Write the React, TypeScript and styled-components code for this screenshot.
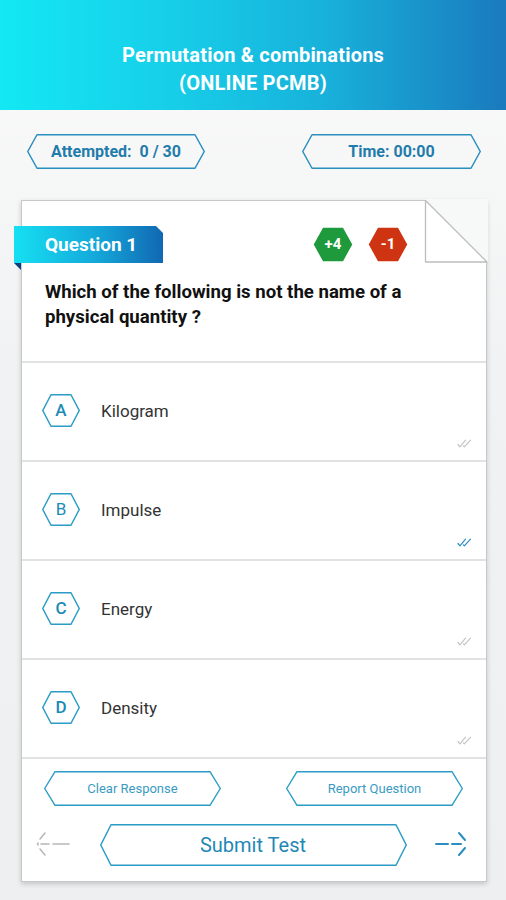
import React from 'react';
import styled, { createGlobalStyle } from 'styled-components';

const GlobalStyle = createGlobalStyle`
  html, body { margin: 0; padding: 0; }
  body {
    background: #f3f4f5;
    font-family: Roboto, "Liberation Sans", sans-serif;
  }
`;

const Page = styled.div`
  width: 506px;
  min-height: 900px;
  background: linear-gradient(180deg, #fbfbfb 0%, #f1f2f3 40%, #eeeff0 100%);
  overflow: hidden;
`;

const Header = styled.header`
  height: 110px;
  box-sizing: border-box;
  padding-top: 41px;
  background: linear-gradient(90deg, #13e8f4 0%, #17cde8 35%, #18b0da 65%, #1a7abd 100%);
  color: #fff;
  text-align: center;
  font-weight: 700;
  font-size: 20px;
  letter-spacing: 0.2px;
  line-height: 28px;
`;

const StatRow = styled.div`
  display: flex;
  justify-content: space-between;
  padding: 24px 25px 0 27px;
`;

const HexBox = styled.div<{ $w: number; $h: number }>`
  position: relative;
  width: ${p => p.$w}px;
  height: ${p => p.$h}px;
  flex-shrink: 0;
  display: flex;
  align-items: center;
  justify-content: center;
`;

const HexSvg = styled.svg`
  position: absolute;
  left: 0;
  top: 0;
  overflow: visible;
`;

const HexLabel = styled.span<{ $size: number; $color: string; $weight: number }>`
  position: relative;
  font-size: ${p => p.$size}px;
  color: ${p => p.$color};
  font-weight: ${p => p.$weight};
  white-space: pre;
  line-height: 1;
`;

type HexProps = {
  w: number;
  h: number;
  d: number;
  stroke?: string;
  fill?: string;
  sw?: number;
  children?: React.ReactNode;
};

function Hex({ w, h, d, stroke = 'none', fill = 'none', sw = 1.5, children }: HexProps) {
  const o = sw / 2;
  const pts = `${d},${o} ${w - d},${o} ${w - o},${h / 2} ${w - d},${h - o} ${d},${h - o} ${o},${h / 2}`;
  return (
    <HexBox $w={w} $h={h}>
      <HexSvg width={w} height={h} viewBox={`0 0 ${w} ${h}`}>
        <polygon points={pts} fill={fill} stroke={stroke} strokeWidth={sw} strokeLinejoin="round" />
      </HexSvg>
      {children}
    </HexBox>
  );
}

const Card = styled.section`
  position: relative;
  margin: 31px 0 0 21px;
  width: 466px;
  box-sizing: border-box;
  background: #fff;
  border: 1px solid #c8c8c8;
  box-shadow: 0 2px 5px rgba(0, 0, 0, 0.18);
`;

const Fold = styled.svg`
  position: absolute;
  top: -2px;
  right: -2px;
  overflow: visible;
`;

const HeadRow = styled.div`
  display: flex;
  align-items: center;
  padding-top: 25px;
`;

const Ribbon = styled.div`
  position: relative;
  margin-left: -8px;
  width: 149px;
  height: 37px;
  box-sizing: border-box;
  padding-left: 31px;
  display: flex;
  align-items: center;
  color: #fff;
  font-weight: 700;
  font-size: 19px;
  background: linear-gradient(90deg, #16e0f2 0%, #14a8da 55%, #1168b2 100%);
  clip-path: polygon(0 0, 142px 0, 149px 7px, 149px 100%, 0 100%);
`;

const RibbonTail = styled.div`
  position: absolute;
  left: -8px;
  top: 62px;
  width: 0;
  height: 0;
  border-top: 7px solid #0b3f80;
  border-left: 7px solid transparent;
`;

const Badges = styled.div`
  display: flex;
  gap: 15px;
  margin-left: auto;
  margin-right: 78px;
`;

const QuestionText = styled.p`
  margin: 0;
  padding: 17px 30px 31px 23px;
  font-size: 18.6px;
  font-weight: 700;
  line-height: 25px;
  color: #111;
`;

const OptionRow = styled.div`
  position: relative;
  height: 99px;
  box-sizing: border-box;
  border-top: 2px solid #e2e2e2;
  display: flex;
  align-items: center;
  padding: 0 0 2px 20px;
  gap: 21px;
`;

const OptionText = styled.span`
  font-size: 17px;
  color: #333;
`;

const Tick = styled.svg`
  position: absolute;
  right: 13px;
  bottom: 12px;
`;

const Footer = styled.div`
  border-top: 2px solid #e2e2e2;
  padding: 12px 23px 15px 22px;
  display: flex;
  flex-direction: column;
  gap: 18px;
`;

const ButtonRow = styled.div`
  display: flex;
  justify-content: space-between;
`;

const SubmitRow = styled.div`
  display: flex;
  align-items: center;
  justify-content: space-between;
  margin: 0 -7px 0 -8px;
`;

const options = [
  { letter: 'A', text: 'Kilogram', selected: false },
  { letter: 'B', text: 'Impulse', selected: true },
  { letter: 'C', text: 'Energy', selected: false },
  { letter: 'D', text: 'Density', selected: false },
];

const BLUE = '#2a9cc6';

function DoubleTick({ color }: { color: string }) {
  return (
    <Tick width="16" height="9" viewBox="0 0 16 9">
      <path d="M1 5.5 L3 7.8 L8.5 1.2 M6.5 7 L7.3 7.8 L13.5 1.2" fill="none" stroke={color} strokeWidth="1.2" strokeLinecap="round" strokeLinejoin="round" />
    </Tick>
  );
}

export default function App() {
  return (
    <Page>
      <GlobalStyle />
      <Header>
        Permutation &amp; combinations
        <br />
        (ONLINE PCMB)
      </Header>
      <StatRow>
        <Hex w={178} h={35} d={10} stroke="#2a8fbf" sw={1.5}>
          <HexLabel $size={16} $color="#1f7cab" $weight={700}>{'Attempted:  0 / 30'}</HexLabel>
        </Hex>
        <Hex w={179} h={35} d={10} stroke="#2a8fbf" sw={1.5}>
          <HexLabel $size={16} $color="#1f7cab" $weight={700}>Time: 00:00</HexLabel>
        </Hex>
      </StatRow>
      <Card>
        <Fold width="64" height="64" viewBox="0 0 64 64">
          <polygon points="0,0 64,0 64,64" fill="#f7f8f8" />
          <polygon points="1.5,1.5 63,63 1.5,63" fill="#fff" stroke="#bdbdbd" strokeWidth="1.3" strokeLinejoin="round" />
        </Fold>
        <HeadRow>
          <Ribbon>Question 1</Ribbon>
          <RibbonTail />
          <Badges>
            <Hex w={40} h={35} d={10} fill="#1e9a3c">
              <HexLabel $size={15} $color="#fff" $weight={700}>+4</HexLabel>
            </Hex>
            <Hex w={40} h={35} d={10} fill="#cf3412">
              <HexLabel $size={15} $color="#fff" $weight={700}>-1</HexLabel>
            </Hex>
          </Badges>
        </HeadRow>
        <QuestionText>
          Which of the following is not the name of a
          <br />
          physical quantity ?
        </QuestionText>
        {options.map(o => (
          <OptionRow key={o.letter}>
            <Hex w={38} h={33} d={9} stroke={BLUE} sw={1.5}>
              <HexLabel $size={17} $color="#1a8ab6" $weight={o.selected ? 400 : 500}>{o.letter}</HexLabel>
            </Hex>
            <OptionText>{o.text}</OptionText>
            <DoubleTick color={o.selected ? '#2a8fc0' : '#c4c4c4'} />
          </OptionRow>
        ))}
        <Footer>
          <ButtonRow>
            <Hex w={177} h={35} d={11} stroke={BLUE} sw={1.4}>
              <HexLabel $size={13} $color="#3a9bc2" $weight={400}>Clear Response</HexLabel>
            </Hex>
            <Hex w={177} h={35} d={11} stroke={BLUE} sw={1.4}>
              <HexLabel $size={13} $color="#3a9bc2" $weight={400}>Report Question</HexLabel>
            </Hex>
          </ButtonRow>
          <SubmitRow>
            <svg width="36" height="28" viewBox="0 0 36 28">
              <g fill="none" stroke="#b8b8b8" strokeWidth="1.6" strokeLinecap="round">
                <path d="M9 2 L4 8" />
                <path d="M2 12 L1.5 13 L2 14" />
                <path d="M4 18 L9 24" />
                <path d="M5 13 L13 13" />
                <path d="M17 13 L33 13" />
              </g>
            </svg>
            <Hex w={307} h={42} d={11} stroke={BLUE} sw={1.5}>
              <HexLabel $size={20} $color="#1f88b6" $weight={400}>Submit Test</HexLabel>
            </Hex>
            <svg width="36" height="28" viewBox="0 0 36 28">
              <g fill="none" stroke="#2a8fc0" strokeWidth="2" strokeLinecap="round">
                <path d="M2 13 L14 13" />
                <path d="M18 13 L27 13" />
                <path d="M25 2 L31 9" />
                <path d="M31 17 L25 24" />
              </g>
            </svg>
          </SubmitRow>
        </Footer>
      </Card>
    </Page>
  );
}
